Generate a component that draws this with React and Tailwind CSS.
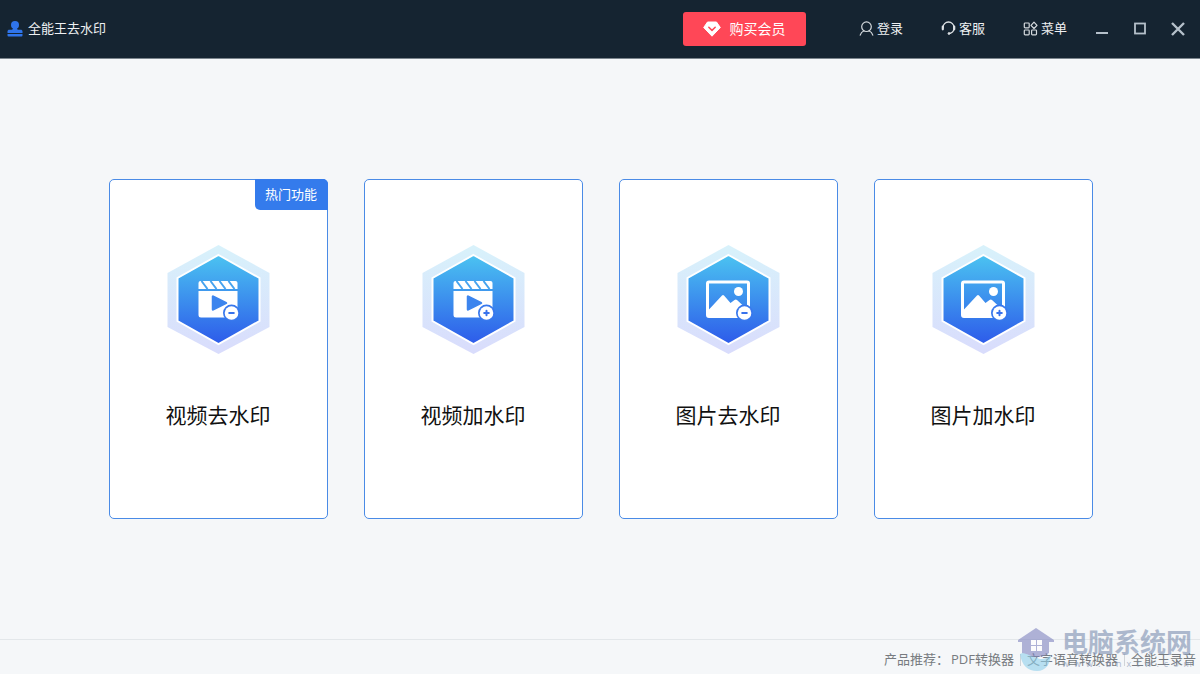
import React from "react";

const tools = [
  { name: "视频去水印", kind: "video", action: "minus", hot: true },
  { name: "视频加水印", kind: "video", action: "plus" },
  { name: "图片去水印", kind: "image", action: "minus" },
  { name: "图片加水印", kind: "image", action: "plus" },
];

const products = ["PDF转换器", "文字语音转换器", "全能王录音"];

const StampIcon = () => (
  <svg className="h-4 w-4" viewBox="0 0 16 16" fill="#2f74ea" aria-hidden="true">
    <circle cx="8" cy="4" r="4" />
    <path d="M6 6h4v1.500c0 .8.500 1.200 1.200 1.200h2.500c1 0 1.800.7 1.800 1.700V12H.5v-1.600c0-1 .8-1.700 1.800-1.700h2.500C5.500 8.700 6 8.300 6 7.500z" />
    <path d="M.5 13h15v1.500a1 1 0 0 1-1 1h-13a1 1 0 0 1-1-1z" />
  </svg>
);

const DiamondIcon = () => (
  <svg className="h-4 w-[18px]" viewBox="0 0 18 16" aria-hidden="true">
    <path d="M4.500 1h9L17.300 6.500 9 15.200.7 6.500z" fill="#fff" stroke="#fff" strokeLinejoin="round" />
    <path d="M5.800 6.200 9 9.400l3.200-3.200" fill="none" stroke="#ff4757" strokeWidth="1.500" strokeLinecap="round" strokeLinejoin="round" />
  </svg>
);

const UserIcon = () => (
  <svg className="h-4 w-[15px]" viewBox="0 0 15 16" fill="none" stroke="#d5dade" strokeWidth="1.200" strokeLinecap="round" aria-hidden="true">
    <circle cx="7.500" cy="5.700" r="4.800" />
    <path d="M1.200 14.200c.6-2.200 2-3.600 3.800-4.400M13.800 14.200c-.6-2.200-2-3.600-3.800-4.400" />
  </svg>
);

const ServiceIcon = () => (
  <svg className="h-4 w-[15px]" viewBox="0 0 15 16" fill="none" stroke="#dfe3e6" strokeLinecap="round" aria-hidden="true">
    <path d="M2 6.500a5.500 5.500 0 0 1 11 0c0 3.200-1.800 5.500-4.500 6" strokeWidth="1.300" />
    <path d="M1.800 5.500v2.800M13.200 5.500v2.800" strokeWidth="2.200" />
    <circle cx="8" cy="12.500" r="0.900" fill="#dfe3e6" />
  </svg>
);

const MenuIcon = () => (
  <svg className="h-4 w-[15px]" viewBox="0 0 15 16" fill="none" stroke="#d5dade" strokeWidth="1.200" aria-hidden="true">
    <rect x="1.300" y="2" width="4.900" height="4.900" rx="0.800" />
    <path d="M11 1.100 14 4.300 11 7.500 8 4.300z" strokeLinejoin="round" />
    <rect x="1.300" y="9" width="4.900" height="4.900" rx="0.800" />
    <rect x="8.600" y="9" width="4.900" height="4.900" rx="0.800" />
  </svg>
);

const VideoGlyph = () => (
  <g>
    <path d="M33 36h35a2 2 0 0 1 2 2v6H31v-6a2 2 0 0 1 2-2z" fill="#fff" />
    <path d="m34 36 6 8M43 36l6 8M52 36l6 8M61 36l6 8" stroke="#46a3ee" strokeWidth="2" />
    <path d="M31 46h39v24a2.500 2.500 0 0 1-2.500 2.500h-34A2.500 2.500 0 0 1 31 70z" fill="#fff" />
    <path d="M45.500 51.500v13L58.500 58z" fill="#3c85ee" stroke="#3c85ee" strokeWidth="2.500" strokeLinejoin="round" />
  </g>
);

const ImageGlyph = () => (
  <g>
    <rect x="30" y="37" width="41" height="34.500" rx="1.500" fill="none" stroke="#fff" strokeWidth="3" />
    <circle cx="61" cy="46.500" r="4.500" fill="#fff" />
    <path d="m31 65 13.500-14.500a1.500 1.500 0 0 1 2 0L53 58l4-3a2 2 0 0 1 2.500 0L66 61v10H31z" fill="#fff" />
  </g>
);

const ToolIcon = ({ kind, action, id }) => (
  <svg className="h-[110px] w-[104px]" viewBox="0 0 104 110" aria-hidden="true">
    <defs>
      <linearGradient id={`outer-${id}`} x1="0" y1="0" x2="0" y2="1">
        <stop offset="0" stopColor="#d8f2fb" />
        <stop offset="1" stopColor="#d9dcfc" />
      </linearGradient>
      <linearGradient id={`inner-${id}`} x1="0" y1="0" x2="0" y2="1">
        <stop offset="0" stopColor="#4bc3f1" />
        <stop offset="1" stopColor="#2d5bea" />
      </linearGradient>
    </defs>
    <path d="m52.500 0 51 28v54l-51 27-51-27V28z" fill={`url(#outer-${id})`} />
    <path d="m52.500 10 41 23v43l-41 23-41-23V33z" fill={`url(#inner-${id})`} stroke="#fff" strokeWidth="2" />
    <g transform="translate(1.500 0)">
      {kind === "video" ? <VideoGlyph /> : <ImageGlyph />}
      <circle cx={kind === "video" ? 64 : 67} cy="68" r="8.500" fill="#3878ed" />
      <circle cx={kind === "video" ? 64 : 67} cy="68" r="6.800" fill="#fff" />
      <g transform={kind === "video" ? "translate(64 68)" : "translate(67 68)"} stroke="#3872ec" strokeWidth="2" strokeLinecap="round">
        <path d="M-2.300 0h4.600" />
        {action === "plus" && <path d="M0-2.300v4.600" />}
      </g>
    </g>
  </svg>
);

const Header = () => (
  <header className="flex h-[59px] shrink-0 items-center justify-between border-b border-[#7b858d] bg-[#152431] text-[13px] text-[#eef0f2]">
    <div className="flex items-center gap-[5px] pl-[7px]">
      <StampIcon />
      <h1>全能王去水印</h1>
    </div>
    <div className="flex items-center pr-[15px]">
      <button type="button" className="mr-[53px] flex h-[34px] w-[123px] items-center justify-center gap-2 rounded-[3px] bg-[#ff4757] text-sm text-white">
        <DiamondIcon />
        购买会员
      </button>
      <nav className="mr-7 flex items-center gap-[38px]">
        <button type="button" className="flex items-center gap-[3px]">
          <UserIcon />
          登录
        </button>
        <button type="button" className="flex items-center gap-[3px]">
          <ServiceIcon />
          客服
        </button>
        <button type="button" className="flex items-center gap-[3px]">
          <MenuIcon />
          菜单
        </button>
      </nav>
      <div className="flex items-center gap-6">
        <button type="button" aria-label="最小化">
          <svg className="h-4 w-[14px]" viewBox="0 0 14 16" stroke="#b5c0ca" strokeWidth="2">
            <path d="M1 12h12" />
          </svg>
        </button>
        <button type="button" aria-label="最大化">
          <svg className="h-4 w-[14px]" viewBox="0 0 14 16" fill="none" stroke="#b5c0ca" strokeWidth="1.800">
            <rect x="2" y="2.500" width="10" height="10" />
          </svg>
        </button>
        <button type="button" aria-label="关闭">
          <svg className="h-4 w-[14px]" viewBox="0 0 14 16" stroke="#b5c0ca" strokeWidth="2.400">
            <path d="m1 2 12 12M13 2 1 14" />
          </svg>
        </button>
      </div>
    </div>
  </header>
);

const ToolCard = ({ tool, id }) => (
  <button
    type="button"
    className="relative flex h-[340px] w-[219px] flex-col items-center rounded-[5px] border border-[#4a8be6] bg-white pt-[65px]"
  >
    {tool.hot && (
      <span className="absolute -top-px -right-px flex h-[31px] w-[73px] items-center justify-center rounded-tr-[5px] rounded-bl-[5px] bg-[#347bec] text-[13px] text-white">
        热门功能
      </span>
    )}
    <ToolIcon kind={tool.kind} action={tool.action} id={id} />
    <span className="mt-11 text-[21px] leading-8 text-[#111]">{tool.name}</span>
  </button>
);

// site mark that sits over the footer's right end
const SiteMark = () => (
  <div className="pointer-events-none absolute right-2 bottom-0 flex items-start gap-2 opacity-60">
    <svg className="h-12 w-9" viewBox="0 0 36 48" aria-hidden="true">
      <path d="M2 28c2 12 8 17 17 17s13-7 14-16c-6 5-11 5-16 2S8 25 2 28z" fill="#8fd0ec" />
      <path d="M18 2 0 14v2h4v11c5 0 9 4 14 4 4 0 9-1 13-4V16h5v-2z" fill="#7f84c0" />
      <path d="M13 14h5v5h-5zM19 14h5v5h-5zM13 20h5v5h-5zM19 20h5v5h-5z" fill="#fff" />
    </svg>
    <div className="flex flex-col items-center">
      <span className="text-[26px] leading-8 font-bold text-[#7c8fb0]">电脑系统网</span>
      <span className="flex w-full justify-between text-[9px] leading-3 text-[#7c8fb0]">
        {"www.dnxtw.com".split("").map((c, i) => (
          <span key={i}>{c}</span>
        ))}
      </span>
    </div>
  </div>
);

const Footer = () => (
  <footer className="relative flex h-[35px] shrink-0 items-center justify-end border-t border-[#e3e7ea] pt-[5px] pr-1 text-[13px] text-[#777b80]">
    <span className="mr-0.5">产品推荐：</span>
    <ul className="flex items-center">
      {products.map((product, i) => (
        <li key={product} className="flex items-center">
          {i > 0 && <span className="mx-[6px] h-3 w-px bg-[#d0d4d8]" />}
          <a href="#">{product}</a>
        </li>
      ))}
    </ul>
    <SiteMark />
  </footer>
);

const App = () => {
  return (
    <div className="flex min-h-screen flex-col bg-[#f5f7f9] font-['Open_Sans','Noto_Sans_CJK_SC',sans-serif]">
      <Header />
      <main className="flex flex-1 flex-wrap items-center justify-center gap-9 pl-px">
        {tools.map((tool, i) => (
          <ToolCard key={tool.name} tool={tool} id={i} />
        ))}
      </main>
      <Footer />
    </div>
  );
};

export default App;
